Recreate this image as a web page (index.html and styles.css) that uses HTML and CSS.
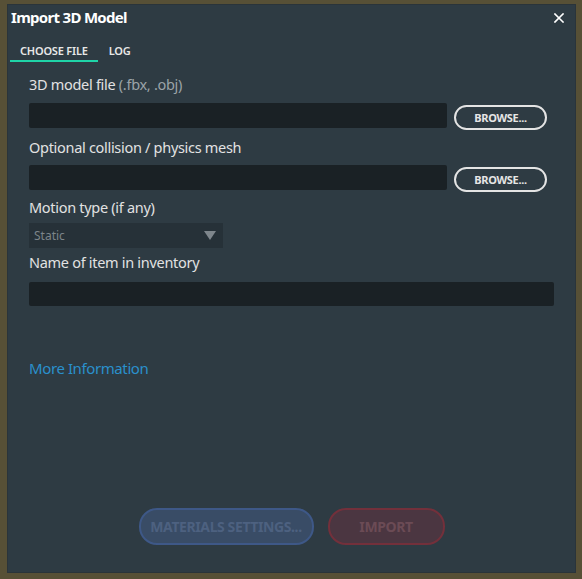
FILE: index.html
```html
<!DOCTYPE html>
<html>
<head>
<meta charset="utf-8">
<link rel="stylesheet" href="styles.css">
</head>
<body>
<div class="window">
  <div class="titlebar">
    <span class="title">Import 3D Model</span>
    <svg class="close" width="10" height="10" viewBox="0 0 10 10"><path d="M1 1 L9 9 M9 1 L1 9" stroke="#fff" stroke-width="1.6" stroke-linecap="square"/></svg>
  </div>
  <div class="tabs">
    <div class="tab active">CHOOSE FILE</div>
    <div class="tab">LOG</div>
  </div>
  <div class="content">
    <div class="label">3D model file <span class="hint">(.fbx, .obj)</span></div>
    <div class="row first">
      <div class="input"></div>
      <button class="browse">BROWSE...</button>
    </div>
    <div class="label">Optional collision / physics mesh</div>
    <div class="row second">
      <div class="input"></div>
      <button class="browse">BROWSE...</button>
    </div>
    <div class="label">Motion type (if any)</div>
    <div class="select">
      <span>Static</span>
      <svg width="12" height="9" viewBox="0 0 12 9"><path d="M0 0 H12 L6 9 Z" fill="#7e868c"/></svg>
    </div>
    <div class="label">Name of item in inventory</div>
    <div class="input full"></div>
    <a class="more">More Information</a>
  </div>
  <div class="actions">
    <button class="btn materials">MATERIALS SETTINGS...</button>
    <button class="btn import">IMPORT</button>
  </div>
</div>
</body>
</html>
```
FILE: styles.css
```css
html, body {
  margin: 0;
  padding: 0;
  background: #575036;
  width: 582px;
  height: 579px;
  overflow: hidden;
  font-family: "Noto Sans", sans-serif;
}
.window {
  margin: 4px 6px 6px 7px;
  height: 569px;
  background: #2e3b43;
  box-shadow: inset 0 0 0 1px #2a343a;
  display: flex;
  flex-direction: column;
  color: #e6e6e6;
}
.titlebar {
  display: flex;
  justify-content: space-between;
  align-items: center;
  padding: 0 12px 0 4px;
  height: 26px;
}
.title {
  font-weight: bold;
  font-size: 15px;
  line-height: 20px;
  color: #fff;
  letter-spacing: -0.7px;
}
.close { margin-top: 1px; }
.tabs {
  display: flex;
  padding: 8px 0 0 3px;
}
.tab {
  font-size: 11px;
  line-height: 15px;
  font-weight: 600;
  color: #e8e8e8;
  padding: 5px 10px 2px 10px;
  letter-spacing: -0.2px;
  border-bottom: 2px solid transparent;
}
.tab + .tab { padding-left: 11px; }
.tab.active {
  border-bottom-color: #1fd4a8;
}
.content {
  padding: 12px 22px 0 22px;
  display: flex;
  flex-direction: column;
  flex: 1;
}
.label {
  font-size: 14.5px;
  color: #e2e2e2;
  letter-spacing: -0.3px;
  height: 20px;
  line-height: 20px;
}
.hint { color: #9ba3a8; }
.row {
  display: flex;
  align-items: flex-start;
  gap: 7px;
}
.row.first { margin: 9px 0 7px 0; }
.row.second { margin: 8px 0 5px 0; }
.input {
  flex: 1;
  height: 25px;
  background: #1a2125;
  border-radius: 2px;
}
.browse {
  width: 93px;
  height: 25px;
  margin-top: 2px;
  margin-right: 7px;
  border: 2px solid #e4e4e4;
  border-radius: 13px;
  background: transparent;
  color: #e6e6e6;
  font-family: "Noto Sans", sans-serif;
  font-size: 11px;
  font-weight: bold;
  letter-spacing: -0.3px;
  padding: 0;
}
.select {
  width: 194px;
  height: 25px;
  margin: 6px 0 4px 0;
  background: #263138;
  display: flex;
  justify-content: space-between;
  align-items: center;
  padding: 0 7px 0 5px;
  box-sizing: border-box;
  font-size: 12px;
  color: #7c858a;
}
.input.full {
  flex: none;
  margin-top: 10px;
  height: 24px;
}
.more {
  display: block;
  margin-top: 52px;
  font-size: 15px;
  line-height: 20px;
  color: #2a90cc;
  letter-spacing: -0.4px;
}
.actions {
  display: flex;
  justify-content: center;
  gap: 14px;
  padding: 0 0 28px 0;
}
.btn {
  height: 37px;
  border-radius: 18px;
  font-family: "Noto Sans", sans-serif;
  font-weight: bold;
  font-size: 14px;
  letter-spacing: -0.4px;
  padding: 0;
}
.materials {
  width: 175px;
  background: #394c66;
  border: 2px solid #3e5887;
  color: #4d6180;
}
.import {
  width: 117px;
  background: #4b3641;
  border: 2px solid #73303b;
  color: #6b4b55;
}
```
